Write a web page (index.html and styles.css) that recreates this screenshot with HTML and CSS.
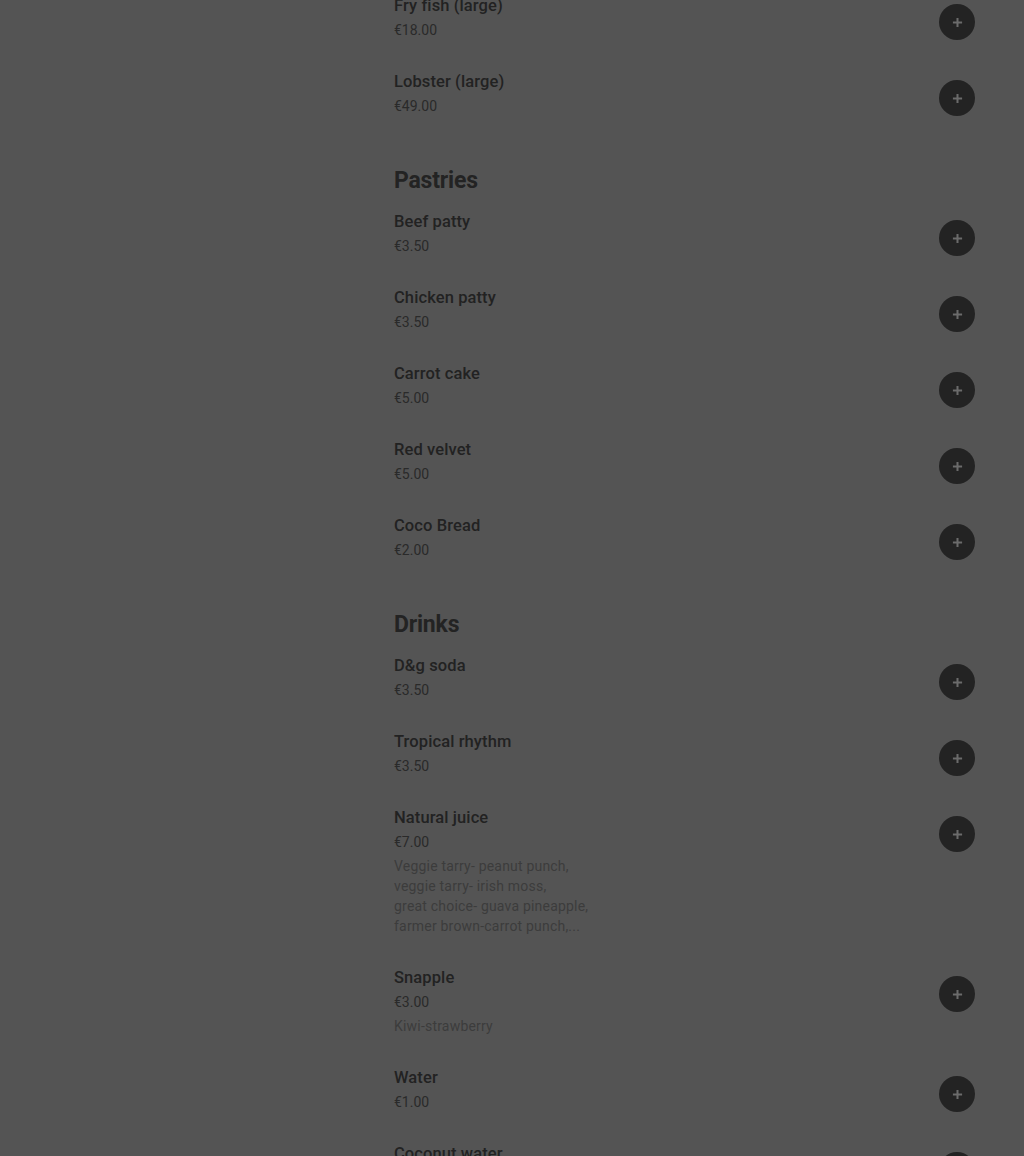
FILE: index.html
```html
<!DOCTYPE html>
<html lang="en">
<head>
  <meta charset="UTF-8" />
  <meta name="viewport" content="width=device-width, initial-scale=1" />
  <title>Menu</title>
  <link rel="stylesheet" href="styles.css">
</head>
<body>

<div class="page">
  <aside class="side"></aside>

  <main class="menu">
    <section class="menu-section">
      <div class="item">
        <div class="item-info">
          <h3 class="item-name">Fry fish (large)</h3>
          <p class="item-price">€18.00</p>
        </div>
        <button class="add-btn" aria-label="Add"><svg viewBox="0 0 12 12"><path d="M6 1v10M1 6h10"/></svg></button>
      </div>
      <div class="item">
        <div class="item-info">
          <h3 class="item-name">Lobster (large)</h3>
          <p class="item-price">€49.00</p>
        </div>
        <button class="add-btn" aria-label="Add"><svg viewBox="0 0 12 12"><path d="M6 1v10M1 6h10"/></svg></button>
      </div>
    </section>

    <section class="menu-section">
      <h2 class="section-title">Pastries</h2>
      <div class="item">
        <div class="item-info">
          <h3 class="item-name">Beef patty</h3>
          <p class="item-price">€3.50</p>
        </div>
        <button class="add-btn" aria-label="Add"><svg viewBox="0 0 12 12"><path d="M6 1v10M1 6h10"/></svg></button>
      </div>
      <div class="item">
        <div class="item-info">
          <h3 class="item-name">Chicken patty</h3>
          <p class="item-price">€3.50</p>
        </div>
        <button class="add-btn" aria-label="Add"><svg viewBox="0 0 12 12"><path d="M6 1v10M1 6h10"/></svg></button>
      </div>
      <div class="item">
        <div class="item-info">
          <h3 class="item-name">Carrot cake</h3>
          <p class="item-price">€5.00</p>
        </div>
        <button class="add-btn" aria-label="Add"><svg viewBox="0 0 12 12"><path d="M6 1v10M1 6h10"/></svg></button>
      </div>
      <div class="item">
        <div class="item-info">
          <h3 class="item-name">Red velvet</h3>
          <p class="item-price">€5.00</p>
        </div>
        <button class="add-btn" aria-label="Add"><svg viewBox="0 0 12 12"><path d="M6 1v10M1 6h10"/></svg></button>
      </div>
      <div class="item">
        <div class="item-info">
          <h3 class="item-name">Coco Bread</h3>
          <p class="item-price">€2.00</p>
        </div>
        <button class="add-btn" aria-label="Add"><svg viewBox="0 0 12 12"><path d="M6 1v10M1 6h10"/></svg></button>
      </div>
    </section>

    <section class="menu-section">
      <h2 class="section-title">Drinks</h2>
      <div class="item">
        <div class="item-info">
          <h3 class="item-name">D&amp;g soda</h3>
          <p class="item-price">€3.50</p>
        </div>
        <button class="add-btn" aria-label="Add"><svg viewBox="0 0 12 12"><path d="M6 1v10M1 6h10"/></svg></button>
      </div>
      <div class="item">
        <div class="item-info">
          <h3 class="item-name">Tropical rhythm</h3>
          <p class="item-price">€3.50</p>
        </div>
        <button class="add-btn" aria-label="Add"><svg viewBox="0 0 12 12"><path d="M6 1v10M1 6h10"/></svg></button>
      </div>
      <div class="item">
        <div class="item-info">
          <h3 class="item-name">Natural juice</h3>
          <p class="item-price">€7.00</p>
          <p class="item-desc">Veggie tarry- peanut punch,<br>veggie tarry- irish moss,<br>great choice- guava pineapple,<br>farmer brown-carrot punch,...</p>
        </div>
        <button class="add-btn" aria-label="Add"><svg viewBox="0 0 12 12"><path d="M6 1v10M1 6h10"/></svg></button>
      </div>
      <div class="item">
        <div class="item-info">
          <h3 class="item-name">Snapple</h3>
          <p class="item-price">€3.00</p>
          <p class="item-desc">Kiwi-strawberry</p>
        </div>
        <button class="add-btn" aria-label="Add"><svg viewBox="0 0 12 12"><path d="M6 1v10M1 6h10"/></svg></button>
      </div>
      <div class="item">
        <div class="item-info">
          <h3 class="item-name">Water</h3>
          <p class="item-price">€1.00</p>
        </div>
        <button class="add-btn" aria-label="Add"><svg viewBox="0 0 12 12"><path d="M6 1v10M1 6h10"/></svg></button>
      </div>
      <div class="item">
        <div class="item-info">
          <h3 class="item-name">Coconut water</h3>
          <p class="item-price">€3.00</p>
        </div>
        <button class="add-btn" aria-label="Add"><svg viewBox="0 0 12 12"><path d="M6 1v10M1 6h10"/></svg></button>
      </div>
    </section>
  </main>
</div>

</body>
</html>
```

FILE: styles.css
```css
* { margin: 0; padding: 0; box-sizing: border-box; }

html, body {
  background: #545454;
  height: 100%;
  overflow: hidden;
}

body {
  font-family: Roboto, 'Noto Sans', sans-serif;
  color: #222;
}

.page {
  display: grid;
  grid-template-columns: 394px 581px;
  margin-top: -19px;
}

.menu-section {
  margin-bottom: 32px;
}

.section-title {
  font-size: 23px;
  font-weight: 700;
  line-height: 32px;
  letter-spacing: -0.2px;
  color: #232323;
}

.item {
  display: flex;
  justify-content: space-between;
  align-items: flex-start;
  padding: 13px 0;
}

.item-name {
  font-size: 16.5px;
  font-weight: 500;
  line-height: 24px;
  letter-spacing: 0.1px;
  color: #222;
}

.item-price {
  font-size: 14px;
  line-height: 24px;
  margin-bottom: 2px;
  color: #2a2a2a;
}

.item-desc {
  font-size: 14px;
  line-height: 20px;
  letter-spacing: 0.2px;
  color: #3c3c3c;
  margin-bottom: 4px;
}

.add-btn {
  width: 36px;
  height: 36px;
  margin-top: 10px;
  border: none;
  border-radius: 50%;
  background: #232323;
  display: flex;
  align-items: center;
  justify-content: center;
  cursor: pointer;
  flex-shrink: 0;
}

.add-btn svg {
  width: 11px;
  height: 11px;
  fill: none;
  stroke: #6b6b6b;
  stroke-width: 2.2;
}
```
